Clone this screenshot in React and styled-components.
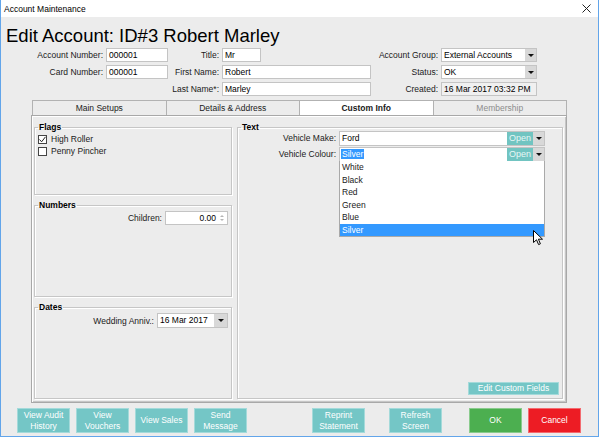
import styled, { createGlobalStyle } from "styled-components";

const GlobalStyle = createGlobalStyle`
  html, body {
    margin: 0;
    padding: 0;
    background: #ffffff;
  }
  body {
    font-family: "Liberation Sans", Arial, sans-serif;
    font-size: 8.5px;
    color: #000;
  }
  * {
    box-sizing: border-box;
  }
`;

const Window = styled.div`
  width: 599px;
  height: 437px;
  display: flex;
  flex-direction: column;
  border: 1px solid #62a5ea;
  border-top: none;
  background-color: #ececec;
  overflow: hidden;
`;

const TitleBar = styled.div`
  height: 17px;
  flex: none;
  display: flex;
  align-items: center;
  justify-content: space-between;
  padding: 0 7px 0 3px;
  background-color: #ffffff;
`;

const Heading = styled.h1`
  margin: 8px 0 1px 5px;
  font-size: 18.5px;
  line-height: 22px;
  font-weight: normal;
  white-space: nowrap;
`;

const FormGrid = styled.div`
  display: grid;
  grid-template-columns: 105px 62px 54px 149px 70px 96px;
  grid-auto-rows: 14px;
  row-gap: 3px;
`;

const Label = styled.span`
  text-align: right;
  padding-right: 3px;
  line-height: 14px;
  white-space: nowrap;
  color: #1a1a1a;
`;

const TextInput = styled.div`
  width: ${(props) => props.$w || "100%"};
  height: ${(props) => props.$h || "14px"};
  border: 1px solid #c4c4c4;
  background-color: ${(props) => (props.$readOnly ? "#f0f0f0" : "#ffffff")};
  padding: 0 2px;
  line-height: 12px;
  text-align: ${(props) => props.$align || "left"};
  white-space: nowrap;
  overflow: hidden;
`;

const Select = styled.div`
  display: flex;
  height: ${(props) => props.$h || "14px"};
  width: ${(props) => props.$w || "100%"};
  border: 1px solid #c4c4c4;
  background-color: #ffffff;
`;

const SelectText = styled.span`
  flex: 1;
  padding: 0 2px;
  line-height: 12px;
  white-space: nowrap;
  overflow: hidden;
`;

const ArrowBox = styled.span`
  width: ${(props) => props.$w || "11px"};
  display: flex;
  align-items: center;
  justify-content: center;
  background-color: #d8d8d8;

  &::after {
    content: "";
    border-left: 3px solid transparent;
    border-right: 3px solid transparent;
    border-top: 3px solid #111;
  }
`;

const TabsWrap = styled.div`
  margin: 4px 0 0 30px;
  width: 536px;
`;

const TabRow = styled.div`
  display: flex;
  height: 15px;
  padding-left: 2px;
`;

const Tab = styled.div`
  width: 134.5px;
  margin-left: -1px;
  border: 1px solid #b2b2b2;
  border-bottom: none;
  line-height: 14px;
  text-align: center;
  background-color: ${(props) => (props.$active ? "#ffffff" : "#ececec")};
  font-weight: ${(props) => (props.$active ? "bold" : "normal")};
  color: ${(props) => (props.$disabled ? "#8c8c8c" : "#1a1a1a")};
`;

const Panel = styled.div`
  height: 288px;
  display: grid;
  grid-template-columns: 198px 326px;
  column-gap: 5px;
  padding: 6px 3px 3px 2px;
  border: 1px solid #a8a8a8;
  box-shadow: inset 1px 1px 0 #ffffff, inset -1px -1px 0 #c6c6c6;
`;

const Column = styled.div`
  display: flex;
  flex-direction: column;
  gap: 5px;
`;

const Group = styled.fieldset`
  margin: 0;
  min-width: 0;
  height: ${(props) => props.$h};
  padding: 0 3px 3px 3px;
  border: 1px solid #c6c6c6;
  box-shadow: inset 1px 1px 0 #ffffff, 1px 1px 0 #ffffff;
  display: flex;
  flex-direction: column;
`;

const Legend = styled.legend`
  padding: 0 1px;
  font-weight: bold;
  line-height: 10px;
`;

const CheckRow = styled.label`
  display: flex;
  align-items: center;
  gap: 4px;
  height: 12px;
  margin-top: ${(props) => props.$mt || "0"};
  color: #1a1a1a;
`;

const CheckBox = styled.span`
  width: 9px;
  height: 9px;
  border: 1px solid #444;
  background-color: #fff;
  display: flex;
  align-items: center;
  justify-content: center;
`;

const FieldRow = styled.div`
  display: flex;
  justify-content: flex-end;
  align-items: center;
  margin-top: ${(props) => props.$mt || "0"};
`;

const Spin = styled.span`
  display: flex;
  flex-direction: column;
  gap: 2px;
  margin-left: 4px;

  &::before,
  &::after {
    content: "";
    border-left: 2px solid transparent;
    border-right: 2px solid transparent;
  }
  &::before {
    border-bottom: 2px solid #b5b5b5;
  }
  &::after {
    border-top: 2px solid #b5b5b5;
  }
`;

const NumberBox = styled.div`
  width: 63px;
  height: 14px;
  border: 1px solid #c4c4c4;
  background-color: #fff;
  display: flex;
  align-items: center;
  justify-content: flex-end;
  padding-right: 3px;
`;

const TextRows = styled.div`
  display: flex;
  flex-direction: column;
  gap: 1px;
  margin: -1px 14px 0 0;
`;

const TextRow = styled.div`
  display: grid;
  grid-template-columns: 1fr 206px;
  height: 15px;
`;

const Combo = styled.div`
  position: relative;
  display: flex;
  border: 1px solid #c4c4c4;
  background-color: #fff;
`;

const ComboText = styled.span`
  flex: 1;
  padding: 0 2px;
  line-height: 13px;
`;

const Selected = styled.span`
  background-color: #3399ff;
  color: #fff;
  padding: 0 1px;
  margin-left: -1px;
`;

const OpenButton = styled.span`
  width: 26px;
  background-color: #71c4c1;
  color: #e6f7f6;
  text-align: center;
  line-height: 13px;
  font-size: 9px;
`;

const DropList = styled.ul`
  position: absolute;
  top: 100%;
  left: -1px;
  right: -1px;
  margin: 0;
  padding: 0;
  list-style: none;
  background-color: #fff;
  border: 1px solid #a9a9a9;
  border-top: none;
  z-index: 2;
`;

const DropItem = styled.li`
  line-height: 12.5px;
  padding-left: 2px;
  background-color: ${(props) => (props.$selected ? "#3399ff" : "transparent")};
  color: ${(props) => (props.$selected ? "#fff" : "#1a1a1a")};
`;

const Cursor = styled.svg`
  position: absolute;
  right: 0;
  bottom: -10px;
`;

const Spacer = styled.div`
  flex: 1;
`;

const ActionButton = styled.button`
  width: ${(props) => props.$w || "53px"};
  height: ${(props) => props.$h || "25px"};
  margin-left: ${(props) => props.$ml || "0"};
  padding: 0;
  border: 1px solid rgba(255, 255, 255, 0.35);
  background-color: ${(props) =>
    props.$tone === "ok" ? "#4caf50" : props.$tone === "cancel" ? "#ed1c24" : "#74c6c6"};
  color: #fff;
  font-family: inherit;
  font-size: 8.5px;
  line-height: 11px;
  text-align: center;
  white-space: pre-line;
`;

const EditButton = styled(ActionButton)`
  align-self: flex-end;
`;

const ButtonBar = styled.div`
  display: flex;
  margin-top: 5px;
  padding-left: 16px;
`;

const colours = ["White", "Black", "Red", "Green", "Blue", "Silver"];

export default function App() {
  return (
    <>
      <GlobalStyle />
      <Window>
        <TitleBar>
          <span>Account Maintenance</span>
          <svg width="9" height="9" viewBox="0 0 9 9">
            <path d="M0.5 0.5 L8.5 8.5 M8.5 0.5 L0.5 8.5" stroke="#222" strokeWidth="1" />
          </svg>
        </TitleBar>

        <Heading>Edit Account: ID#3 Robert Marley</Heading>

        <FormGrid>
          <Label>Account Number:</Label>
          <TextInput>000001</TextInput>
          <Label>Title:</Label>
          <TextInput $w="39px">Mr</TextInput>
          <Label>Account Group:</Label>
          <Select>
            <SelectText>External Accounts</SelectText>
            <ArrowBox />
          </Select>

          <Label>Card Number:</Label>
          <TextInput>000001</TextInput>
          <Label>First Name:</Label>
          <TextInput>Robert</TextInput>
          <Label>Status:</Label>
          <Select>
            <SelectText>OK</SelectText>
            <ArrowBox />
          </Select>

          <span />
          <span />
          <Label>Last Name*:</Label>
          <TextInput>Marley</TextInput>
          <Label>Created:</Label>
          <TextInput $readOnly>16 Mar 2017 03:32 PM</TextInput>
        </FormGrid>

        <TabsWrap>
          <TabRow>
            <Tab>Main Setups</Tab>
            <Tab>Details &amp; Address</Tab>
            <Tab $active>Custom Info</Tab>
            <Tab $disabled>Membership</Tab>
          </TabRow>
          <Panel>
            <Column>
              <Group $h="73px">
                <Legend>Flags</Legend>
                <CheckRow $mt="1px">
                  <CheckBox>
                    <svg width="7" height="7" viewBox="0 0 7 7">
                      <path d="M0.5 3.5 L2.6 5.8 L6.5 0.8" fill="none" stroke="#222" strokeWidth="1" />
                    </svg>
                  </CheckBox>
                  High Roller
                </CheckRow>
                <CheckRow>
                  <CheckBox />
                  Penny Pincher
                </CheckRow>
              </Group>

              <Group $h="97px">
                <Legend>Numbers</Legend>
                <FieldRow $mt="1px">
                  <Label>Children:</Label>
                  <NumberBox>
                    0.00
                    <Spin />
                  </NumberBox>
                </FieldRow>
              </Group>

              <Group $h="97px">
                <Legend>Dates</Legend>
                <FieldRow $mt="1px">
                  <Label>Wedding Anniv.:</Label>
                  <Select $w="71px" $h="15px">
                    <SelectText>16 Mar 2017</SelectText>
                    <ArrowBox $w="13px" />
                  </Select>
                </FieldRow>
              </Group>
            </Column>

            <Group $h="277px">
              <Legend>Text</Legend>
              <TextRows>
                <TextRow>
                  <Label>Vehicle Make:</Label>
                  <Combo>
                    <ComboText>Ford</ComboText>
                    <OpenButton>Open</OpenButton>
                    <ArrowBox />
                  </Combo>
                </TextRow>
                <TextRow>
                  <Label>Vehicle Colour:</Label>
                  <Combo>
                    <ComboText>
                      <Selected>Silver</Selected>
                    </ComboText>
                    <OpenButton>Open</OpenButton>
                    <ArrowBox />
                    <DropList>
                      {colours.map((c) => (
                        <DropItem key={c} $selected={c === "Silver"}>
                          {c}
                        </DropItem>
                      ))}
                      <Cursor width="11" height="16" viewBox="0 0 11 16">
                        <path
                          d="M0.5 0.5 L0.5 12.5 L3.5 9.8 L5.6 14.6 L7.4 13.8 L5.4 9.2 L9.5 9.2 Z"
                          fill="#fff"
                          stroke="#000"
                          strokeWidth="1"
                          strokeLinejoin="round"
                        />
                      </Cursor>
                    </DropList>
                  </Combo>
                </TextRow>
              </TextRows>
              <Spacer />
              <EditButton as="div" $w="91px" $h="13px">
                Edit Custom Fields
              </EditButton>
            </Group>
          </Panel>
        </TabsWrap>

        <ButtonBar>
          <ActionButton>{"View Audit\nHistory"}</ActionButton>
          <ActionButton $ml="6px">{"View\nVouchers"}</ActionButton>
          <ActionButton $ml="6px">View Sales</ActionButton>
          <ActionButton $ml="6px">{"Send\nMessage"}</ActionButton>
          <ActionButton $ml="65px">{"Reprint\nStatement"}</ActionButton>
          <ActionButton $ml="24px">{"Refresh\nScreen"}</ActionButton>
          <ActionButton $ml="27px" $tone="ok">OK</ActionButton>
          <ActionButton $ml="6px" $tone="cancel">Cancel</ActionButton>
        </ButtonBar>
      </Window>
    </>
  );
}
